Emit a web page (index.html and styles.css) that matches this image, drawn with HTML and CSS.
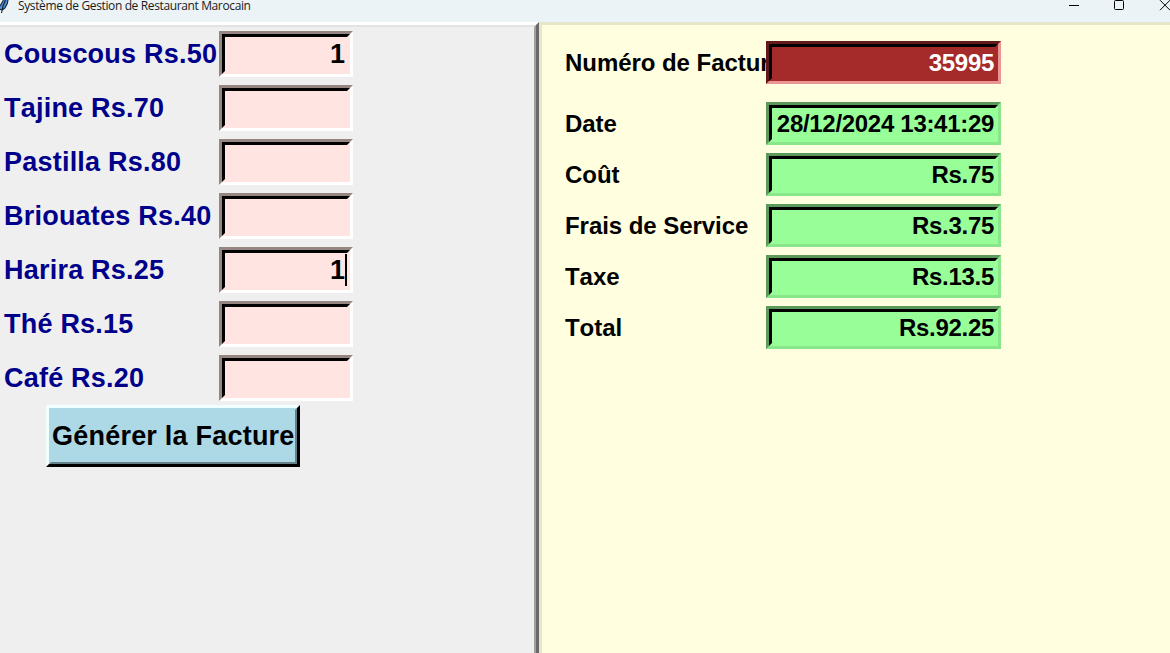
FILE: index.html
```
<!DOCTYPE html>
<html lang="fr">
<head>
<meta charset="utf-8">
<title>Système de Gestion de Restaurant Marocain</title>
<link rel="stylesheet" href="styles.css">
</head>
<body>
<header class="titlebar">
  <svg class="feather" width="9" height="14" viewBox="0 0 9 14"><path d="M0 6L4 0H8L7.500 3 5 8 2.500 10 0 10Z" fill="#4f8fe0"/><path d="M0 6L3.500 0M8 0L7.300 3.500 5 8 2.500 10 0 9.500M5.500 0L3 6 1.500 13" fill="none" stroke="#15202c" stroke-width="1.100"/></svg>
  <span class="title">Système de Gestion de Restaurant Marocain</span>
  <svg class="controls" width="102" height="12" viewBox="0 0 102 12" fill="none" stroke="#000"><path d="M1 5.500h10"/><rect x="46.500" y="0.500" width="9" height="9" rx="1"/><path d="M92 .2l10 10M102 .2l-10 10"/></svg>
</header>
<main class="window">
  <section class="menu">
    <div class="item"><label>Couscous Rs.50</label><div class="entry"><span>1</span></div></div>
    <div class="item"><label>Tajine Rs.70</label><div class="entry"></div></div>
    <div class="item"><label>Pastilla Rs.80</label><div class="entry"></div></div>
    <div class="item"><label>Briouates Rs.40</label><div class="entry"></div></div>
    <div class="item"><label>Harira Rs.25</label><div class="entry focused"><span>1</span></div></div>
    <div class="item"><label>Thé Rs.15</label><div class="entry"></div></div>
    <div class="item"><label>Café Rs.20</label><div class="entry"></div></div>
    <button class="generate"><span>Générer la Facture</span></button>
  </section>
  <section class="bill">
    <div class="line number"><label>Numéro de Facture</label><div class="result red"><span>35995</span></div></div>
    <div class="line"><label>Date</label><div class="result"><span>28/12/2024 13:41:29</span></div></div>
    <div class="line"><label>Coût</label><div class="result"><span>Rs.75</span></div></div>
    <div class="line"><label>Frais de Service</label><div class="result"><span>Rs.3.75</span></div></div>
    <div class="line"><label>Taxe</label><div class="result"><span>Rs.13.5</span></div></div>
    <div class="line"><label>Total</label><div class="result"><span>Rs.92.25</span></div></div>
  </section>
</main>
</body>
</html>
```
FILE: styles.css
```
* { box-sizing: border-box; }
body {
  margin: 0;
  width: 1170px;
  height: 653px;
  overflow: hidden;
  display: flex;
  flex-direction: column;
  font-family: "Liberation Sans", Arial, sans-serif;
  font-weight: bold;
  font-kerning: none;
}
.titlebar {
  height: 22px;
  flex: none;
  display: flex;
  align-items: flex-start;
  background: #ebf3f7;
  color: #1a1a1a;
}
.feather { width: 9px; margin-right: 9px; }
.title {
  flex: 1;
  font: 12px/16px "Open Sans", "Noto Sans", sans-serif;
  letter-spacing: -0.37px;
  margin-top: -2px;
  white-space: nowrap;
}
.controls { flex: none; }
.window { flex: 1; display: flex; min-height: 0; }
.menu {
  position: relative;
  width: 539px;
  flex: none;
  padding: 6px 0 0;
  background: #efefef;
  border: solid;
  border-width: 3px 3px 0 0;
  border-color: #fff #696969 #fff #fff;
}
.menu::before {
  content: "";
  position: absolute;
  inset: 0;
  border: solid;
  border-width: 2px 2px 0 0;
  border-color: #e3e3e3 #a0a0a0;
  pointer-events: none;
}
.item { display: flex; height: 54px; }
.item label {
  width: 215px;
  margin-left: 4px;
  font-size: 27px;
  line-height: 47px;
  letter-spacing: 0.22px;
  color: #00008b;
  white-space: nowrap;
}
.entry {
  position: relative;
  width: 134px;
  height: 46px;
  border: 3px solid;
  border-color: #968681 #fff #fff #968681;
  background: #ffe4e1;
  text-align: right;
  font-size: 27px;
  line-height: 41px;
  padding-right: 5px;
}
.entry::before, .result::before {
  content: "";
  position: absolute;
  inset: 0;
  border: 3px solid;
  border-color: #000 transparent transparent #000;
}
.focused::after {
  content: "";
  position: absolute;
  left: 123px;
  top: 4px;
  width: 2px;
  height: 32px;
  background: #000;
}
.generate {
  position: relative;
  display: block;
  width: 254px;
  height: 62px;
  margin: -4px 0 0 46px;
  padding: 0 0 0 3px;
  border: 3px solid;
  border-color: #f0ffff #000 #000 #f0ffff;
  background: #add8e6;
  color: #000;
  font: bold 27px/56px "Liberation Sans", Arial, sans-serif;
  font-kerning: none;
  letter-spacing: 0.22px;
  text-align: left;
  white-space: nowrap;
}
.generate::before {
  content: "";
  position: absolute;
  inset: 0;
  border: 2px solid;
  border-color: transparent #678189 #678189 transparent;
}
.bill {
  flex: 1;
  padding: 16px 0 0 23px;
  background: #ffffe0;
  border: solid #e6e6ca;
  border-width: 3px 0 0 3px;
}
.line { display: flex; height: 51px; }
.number { height: 61px; }
.line label {
  width: 201px;
  flex: none;
  font-size: 24px;
  line-height: 43px;
  letter-spacing: -0.05px;
  white-space: nowrap;
}
.result {
  position: relative;
  width: 235px;
  height: 43px;
  border: 3px solid;
  border-color: #5c9a5c #8ae68a #8ae68a #5c9a5c;
  background: #98ff98;
  font-size: 24px;
  line-height: 37px;
  letter-spacing: -0.3px;
  text-align: right;
  padding-right: 4px;
  white-space: nowrap;
}
.red { background: #a52a2a; border-color: #631919 #eb9494 #eb9494 #631919; color: #fff; }
```
